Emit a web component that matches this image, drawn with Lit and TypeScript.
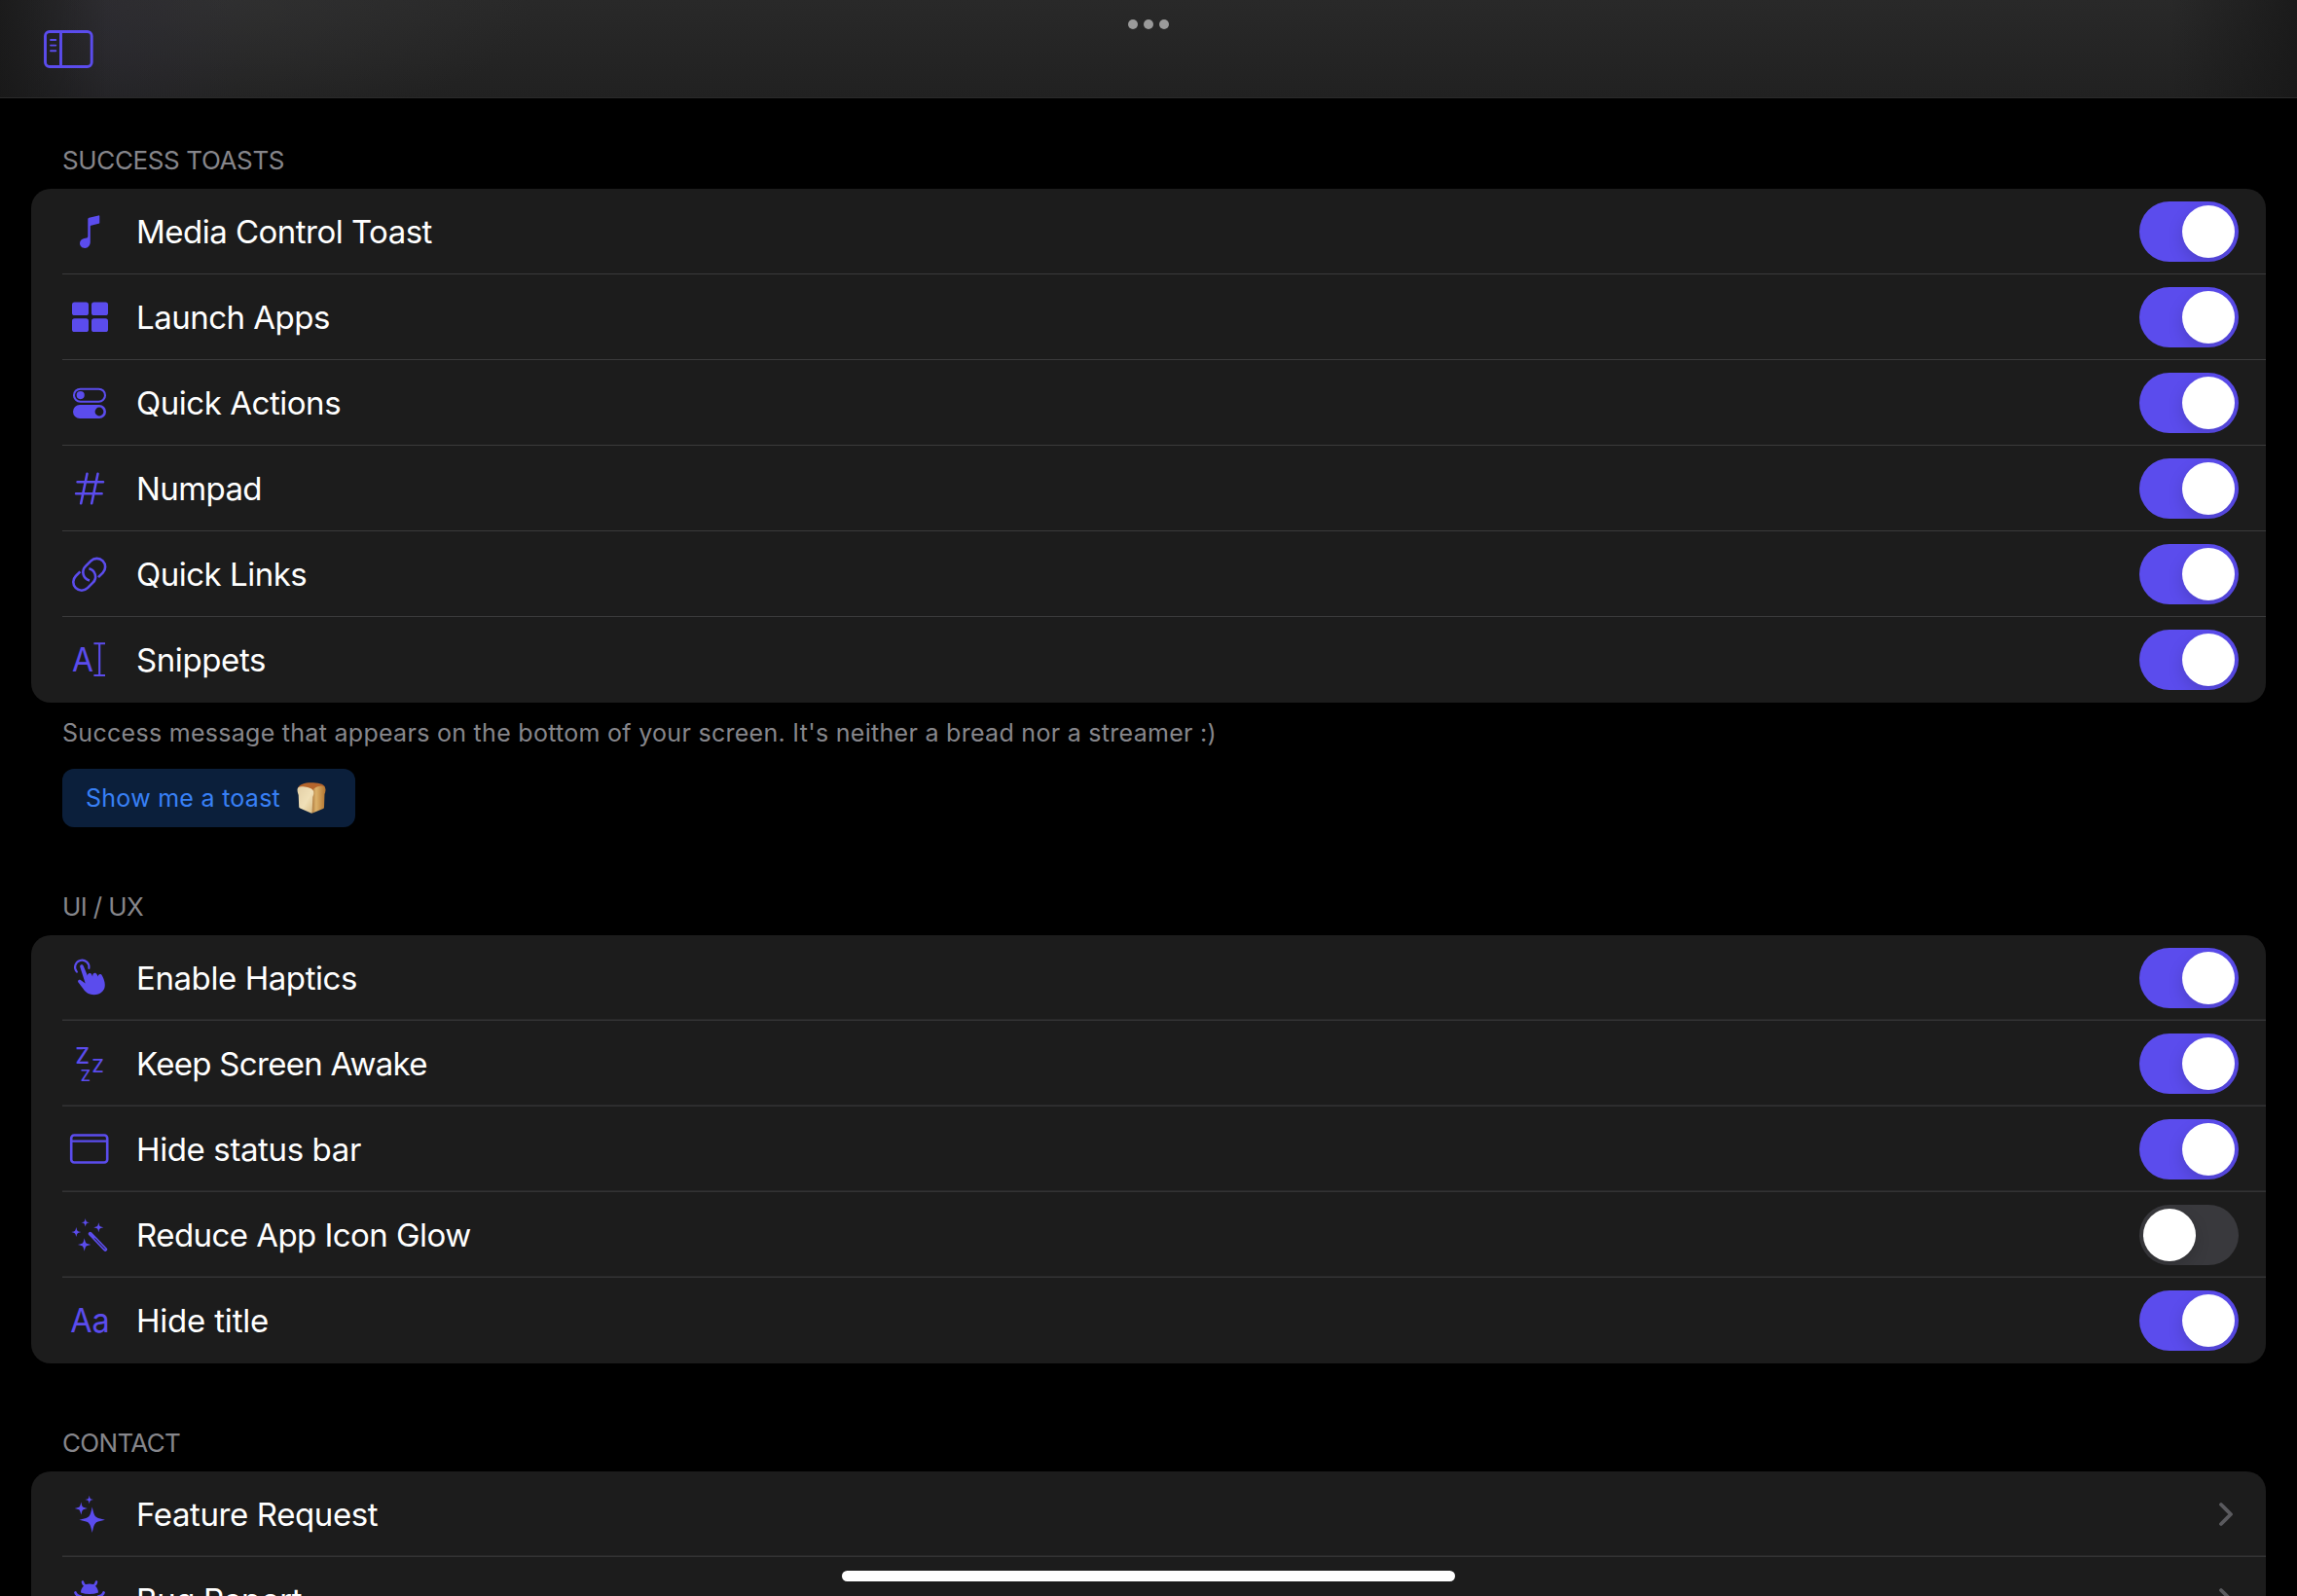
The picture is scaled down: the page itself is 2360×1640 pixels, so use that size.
import { LitElement, html, svg, css, SVGTemplateResult } from "lit";
import { customElement, property } from "lit/decorators.js";
import { classMap } from "lit/directives/class-map.js";
import { styleMap } from "lit/directives/style-map.js";

/** Four-pointed sparkle centred on (x, y) reaching r in every direction. */
const star = (x: number, y: number, r: number) => {
  const k = r * 0.2;
  return svg`<path class="fill" d="M${x} ${y - r}Q${x + k * 0.7} ${y - k * 1.6} ${x + k * 1.3} ${y - k * 1.3}Q${x + k * 1.6} ${y - k * 0.7} ${x + r} ${y}Q${x + k * 1.6} ${y + k * 0.7} ${x + k * 1.3} ${y + k * 1.3}Q${x + k * 0.7} ${y + k * 1.6} ${x} ${y + r}Q${x - k * 0.7} ${y + k * 1.6} ${x - k * 1.3} ${y + k * 1.3}Q${x - k * 1.6} ${y + k * 0.7} ${x - r} ${y}Q${x - k * 1.6} ${y - k * 0.7} ${x - k * 1.3} ${y - k * 1.3}Q${x - k * 0.7} ${y - k * 1.6} ${x} ${y - r}z"/>`;
};

const ICONS: Record<string, SVGTemplateResult> = {
  music: svg`<path class="fill" d="M20.3 9.2q0-1.2 1.2-1.5l9.7-2.3q1.1-.2 1.1.9v6.4q0 .9-.9 1.1l-7.9 1.9q-.7.2-.7.9v15.7c0 3.800-2.200 6.700-5.600 6.700-2.900 0-5.200-1.900-5.200-4.900 0-2.600 1.700-4.400 4.500-5l2.600-.5q1.200-.3 1.200-1.500z"/>`,
  grid: svg`<g class="fill"><rect x="4" y="6.4" width="17" height="13.7" rx="2.6"/><rect x="24" y="6.4" width="17" height="13.7" rx="2.6"/><rect x="4" y="23.2" width="17" height="13.8" rx="2.6"/><rect x="24" y="23.2" width="17" height="13.8" rx="2.6"/></g>`,
  switches: svg`<rect class="line" x="6" y="7.7" width="32" height="13" rx="6.5"/><circle class="fill" cx="12.7" cy="14.1" r="4.1"/><rect class="fill" x="5" y="24" width="34" height="14" rx="7"/><circle class="hole" cx="32" cy="31" r="4.4"/>`,
  hash: svg`<path class="line thick" d="M9.6 15.3H36M8.1 27.3H34.6M19.5 6.8 13.2 37.3M30.5 6.8 24.2 37.3"/>`,
  link: svg`<g class="line thick butt"><path d="M31 25.2 35.6 20.6A8.6 8.6 0 0 0 23.4 8.4L17.9 13.9A8.6 8.6 0 0 0 22 28.4"/><path d="M12.4 19.4 7.8 24A8.6 8.6 0 0 0 20 36.2L25.5 30.7A8.6 8.6 0 0 0 21.4 16.2"/></g>`,
  cursor: svg`<text class="glyph" x="4" y="34" font-size="33.5" textLength="22" lengthAdjust="spacingAndGlyphs">A</text><path class="line butt" d="M26.4 5.3H38M26.4 38H38M32.2 5.3V38"/>`,
  tap: svg`<path class="line" d="M8.9 15.6A7.2 7.2 0 1 1 21.4 11.9"/><path class="fill" d="M12.3 10.8c-.9-2.4 2.5-3.6 3.4-1.2l4.3 10.2c-.5-2.5 2.8-4 4.2-1.4l1 2c-.5-3.5 3-5 4.5-2l1 2.2c0-3 3-3.6 4.2-1.2 2.2 4.2 3.2 7.5 2.8 11-.5 5-5 8.8-11 8.8-5.5 0-8.8-2.4-12-7.2L10.3 26.2c-1-1.8 1.2-3.3 2.8-2l4.6 3.2z"/>`,
  zzz: svg`<g class="glyph mid"><text x="14.8" y="21.7" font-size="22.6">Z</text><text x="30.6" y="30.8" font-size="19">Z</text><text x="17.8" y="40" font-size="16">Z</text></g>`,
  window: svg`<rect class="line thick" x="3.2" y="7.5" width="37" height="28" rx="3"/><path class="line" d="M3.5 13.6H40"/>`,
  wand: svg`${star(17.7, 9.3, 4.2)}${star(31.3, 14.3, 5)}${star(8.3, 19.1, 5)}${star(16.7, 32, 6.8)}<path class="line wand" d="M22.8 20.8 38.2 36.8"/><path class="core" d="M27.2 25.4 37.9 36.5"/>`,
  letters: svg`<text class="glyph" x="2.2" y="33.8" font-size="34" textLength="40.5" lengthAdjust="spacingAndGlyphs">Aa</text>`,
  sparkles: svg`${star(24.7, 27.7, 13.2)}${star(13.3, 16, 6.6)}${star(21.7, 7, 4.3)}`,
  bug: svg`<path class="line thick" d="M15 3.6Q15.4 6.6 18.6 7.8M29 3.6Q28.6 6.6 25.4 7.8M7.4 14.4Q8.2 17.6 13 18.6M36.6 14.4Q35.8 17.6 31 18.6"/><path class="fill" d="M13 14.4C13.3 9 17 5.6 22 5.6S30.7 9 31 14.4Q26.5 16 22 16T13 14.4zM12.500 18Q17 18.400 22 18.400T31.500 18V28C31.500 35 27 39 22 39S12.500 35 12.500 28z"/>`,
};

interface Item { icon: string; label: string; kern: number; on?: boolean; }
interface Group { title: string; kern: number; items: Item[]; kind: string; }

const TOASTS: Group = {
  title: "Success Toasts", kern: -0.38, kind: "crisp",
  items: [
    { icon: "music", label: "Media Control Toast", kern: -0.52, on: true },
    { icon: "grid", label: "Launch Apps", kern: -0.5, on: true },
    { icon: "switches", label: "Quick Actions", kern: -0.46, on: true },
    { icon: "hash", label: "Numpad", kern: -0.6, on: true },
    { icon: "link", label: "Quick Links", kern: -0.5, on: true },
    { icon: "cursor", label: "Snippets", kern: -0.4, on: true },
  ],
};
const UIUX: Group = {
  title: "UI / UX", kern: -0.6, kind: "soft",
  items: [
    { icon: "tap", label: "Enable Haptics", kern: -0.42, on: true },
    { icon: "zzz", label: "Keep Screen Awake", kern: -0.7, on: true },
    { icon: "window", label: "Hide status bar", kern: -0.38, on: true },
    { icon: "wand", label: "Reduce App Icon Glow", kern: -0.55, on: false },
    { icon: "letters", label: "Hide title", kern: -0.2, on: true },
  ],
};
const CONTACT: Group = {
  title: "Contact", kern: -0.68, kind: "soft",
  items: [
    { icon: "sparkles", label: "Feature Request", kern: -0.4 },
    { icon: "bug", label: "Bug Report", kern: -0.42 },
  ],
};

@customElement("settings-toggle")
class SettingsToggle extends LitElement {
  @property({ type: Boolean }) on = false;
  static styles = css`
    :host { display: block; }
    .track { box-sizing: border-box; display: flex; width: 102px; height: 62px; padding: 4px; border-radius: 31px; background: #39393d; overflow: hidden; }
    .track.on { justify-content: flex-end; background: #5b4ced; }
    .knob { width: 54px; height: 54px; border-radius: 50%; background: #fff; box-shadow: 0 6px 16px rgba(0, 0, 0, 0.15); }
  `;
  render() {
    return html`<div class=${classMap({ track: true, on: this.on })} role="switch" aria-checked=${this.on}><div class="knob"></div></div>`;
  }
}

@customElement("settings-row")
class SettingsRow extends LitElement {
  @property({ attribute: false }) item!: Item;
  static styles = css`
    :host { display: block; }
    .row { display: flex; align-items: center; height: 88px; padding-left: 6px; color: #fff; font-size: 33px; }
    .icon { flex: none; width: 44px; height: 44px; margin-right: 26px; overflow: visible; }
    .label { flex: 1; white-space: nowrap; }
    .fill { fill: #5b4ced; }
    .hole { fill: #1c1c1c; }
    .line { fill: none; stroke: #5b4ced; stroke-width: 2.1; stroke-linecap: round; stroke-linejoin: round; }
    .thick { stroke-width: 2.6; }
    .wand { stroke-width: 4; }
    .core { fill: none; stroke: #1c1c1c; stroke-width: 1; }
    .butt { stroke-linecap: butt; }
    .glyph { fill: #5b4ced; font-family: Inter, sans-serif; }
    .mid { text-anchor: middle; font-weight: 500; }
    .toggle { margin-right: 28px; }
    .chevron { width: 16px; height: 28px; margin-right: 33px; fill: none; stroke: #5a5a5e; stroke-width: 3.8; stroke-linecap: round; stroke-linejoin: round; }
  `;
  render() {
    const { icon, label, kern, on } = this.item;
    return html`<div class="row">
      <svg class="icon" viewBox="0 0 44 44">${ICONS[icon]}</svg>
      <span class="label" style=${styleMap({ letterSpacing: `${kern}px` })}>${label}</span>
      ${on === undefined
        ? html`<svg class="chevron" viewBox="0 0 16 28"><path d="M3 4 13 14 3 24"/></svg>`
        : html`<settings-toggle class="toggle" ?on=${on}></settings-toggle>`}
    </div>`;
  }
}

@customElement("settings-group")
class SettingsGroup extends LitElement {
  @property({ attribute: false }) group!: Group;
  static styles = css`
    :host { display: block; }
    .title { margin: 0; padding: 0 0 14px 32px; font-size: 26px; line-height: 30px; font-weight: 400; color: #86868b; text-transform: uppercase; }
    .card { border-radius: 20px; background: #1c1c1c; padding-left: 32px; overflow: hidden; }
    .item { height: 88px; background: linear-gradient(#3a3a3b, #3a3a3b) bottom / 100% 1px no-repeat; }
    .soft .item { background: linear-gradient(#282829 50%, #333334 50%) bottom / 100% 2px no-repeat; }
    .card .item:last-child { background: none; }
  `;
  render() {
    const g = this.group;
    return html`
      <h2 class="title" style=${styleMap({ letterSpacing: `${g.kern}px` })}>${g.title}</h2>
      <div class="card ${g.kind}">
        ${g.items.map((item) => html`<settings-row class="item" .item=${item}></settings-row>`)}
      </div>`;
  }
}

@customElement("app-root")
class AppRoot extends LitElement {
  static styles = css`
    :host { display: block; }
    .screen { position: relative; display: flex; flex-direction: column; width: 2360px; height: 1640px; overflow: hidden; background: #000; font-family: Inter, "Liberation Sans", sans-serif; }
    .bar { flex: none; box-sizing: border-box; display: grid; grid-template-columns: 1fr auto 1fr; height: 101px; padding: 0 45px; border-bottom: 1px solid #2a2a2a;
      background:
        linear-gradient(90deg, rgba(22, 22, 22, 0.75), rgba(22, 22, 22, 0) 110px, rgba(22, 22, 22, 0) 2230px, rgba(22, 22, 22, 0.75)),
        radial-gradient(ellipse 150px 150px at 110px 40px, rgba(44, 41, 58, 0.28), transparent),
        radial-gradient(ellipse 320px 130px at 230px 0, rgba(54, 54, 55, 0.5), transparent),
        linear-gradient(#292929, #212121); }
    .sidebar { width: 51px; height: 39px; margin-top: 31px; fill: none; stroke: #5b4ced; stroke-width: 2.9; }
    .thin { stroke-width: 1.9; stroke-linecap: round; }
    .dots { display: flex; gap: 6px; margin-top: 20px; }
    .dot { width: 10px; height: 10px; border-radius: 50%; background: #9a9a9a; }
    .content { flex: 1; min-height: 0; overflow: hidden; padding: 49px 32px 0; }
    .note { margin: 0; padding: 16px 0 0 32px; font-size: 25px; line-height: 30px; letter-spacing: 0.288px; color: #86868b; white-space: nowrap; }
    .toast { display: flex; align-items: center; box-sizing: border-box; width: 301px; height: 60px; margin: 22px 0 67px 32px; padding: 0 0 0 24px; border: 0; border-radius: 12px; background: #0b1f3b; color: #3880f6; font: 25px Inter, "Liberation Sans", sans-serif; letter-spacing: 0.27px; }
    .toast-label { width: 216px; text-align: left; white-space: nowrap; }
    .bread { width: 32px; height: 34px; }
    .contact { margin-top: 67px; }
    .home { position: absolute; left: 865px; bottom: 15px; width: 630px; height: 11px; border-radius: 5.5px; background: #fff; }
  `;
  render() {
    return html`<div class="screen">
      <header class="bar">
        <svg class="sidebar" viewBox="0 0 51 39"><rect x="1.5" y="1.5" width="47.7" height="36" rx="4.5"/><path d="M17.5 1.5V37.5"/><path class="thin" d="M7 10H12.3M7 15.6H12.3M7 21.2H12.3"/></svg>
        <div class="dots"><i class="dot"></i><i class="dot"></i><i class="dot"></i></div>
      </header>
      <main class="content">
        <settings-group .group=${TOASTS}></settings-group>
        <p class="note">Success message that appears on the bottom of your screen. It's neither a bread nor a streamer :)</p>
        <button class="toast">
          <span class="toast-label">Show me a toast</span>
          <svg class="bread" viewBox="0 0 32 34" role="img" aria-label="bread">
            <defs>
              <linearGradient id="crust" x1="0" x2="1"><stop offset="0" stop-color="#a5703a"/><stop offset=".35" stop-color="#dcb26a"/><stop offset="1" stop-color="#b3742f"/></linearGradient>
              <linearGradient id="crumb" x1="0" x2="1" y2="1"><stop offset="0" stop-color="#e3cfa6"/><stop offset=".55" stop-color="#f0e0b8"/><stop offset="1" stop-color="#d8bc84"/></linearGradient>
            </defs>
            <path fill="#b5652c" d="M2 7C3 3 9 1.200 15.500 1.200S29 2.200 30 6Q31 9 29.500 12L18 15 3 10z"/>
            <path fill="url(#crust)" d="M17 9Q19.500 5.500 25 4.800T30.300 8.500Q30.600 11 29.500 13L29 26.500Q29 27.500 28 28L16.500 32.800Q15 30 16 24z"/>
            <path fill="url(#crumb)" d="M1.500 8.500C1.500 5 5 4.800 9 5.400S17.500 7 18.300 10.500Q18.800 13.500 17.300 16L16.600 32Q16.500 33 15.500 32.600L4.200 27.500Q3.200 27 3.200 26L2.700 14Q1.500 11.500 1.500 8.500z"/>
          </svg>
        </button>
        <settings-group .group=${UIUX}></settings-group>
        <settings-group class="contact" .group=${CONTACT}></settings-group>
      </main>
      <div class="home"></div>
    </div>`;
  }
}
